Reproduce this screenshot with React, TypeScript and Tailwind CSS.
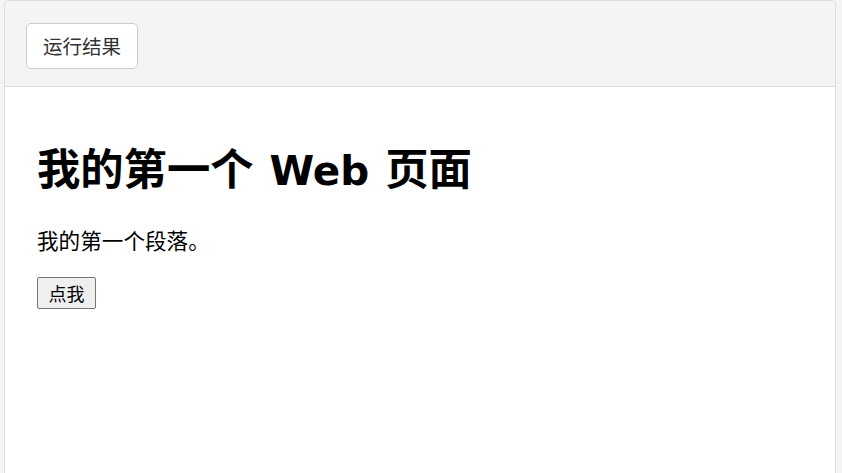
import React from "react";

export default function App() {
  return (
    <div
      className="min-h-screen bg-[#f4f4f4] pl-[4px] pr-[6px] overflow-hidden"
      style={{ fontFamily: '"Noto Sans CJK SC", "Noto Sans", sans-serif' }}
    >
      <div className="h-[480px] border border-b-0 border-[#dddddd] rounded-t-[5px] bg-white overflow-hidden">
        <div className="bg-[#f4f4f4] border-b border-[#dddddd] pt-[22px] pb-[17px] pl-[21px]">
          <button className="w-[112px] h-[46px] bg-white border border-[#cccccc] rounded-[5px] text-[19.5px] text-[#333333] flex items-center justify-center">
            运行结果
          </button>
        </div>
        <div className="pl-[32px] pt-[53px]">
          <h1 className="text-[43.3px] leading-[52px] h-[52px] font-bold text-black m-0 whitespace-nowrap">
            我的第一个
            <span className="ml-[16px] mr-[16px] text-[40.5px] font-['DejaVu_Sans',sans-serif]">Web</span>
            页面
          </h1>
          <p className="mt-[33px] text-[21.6px] leading-[30px] h-[30px] text-black">
            我的第一个段落。
          </p>
          <button className="mt-[22px] w-[59px] h-[32px] bg-[#efefef] border border-[#767676] rounded-[2px] text-[18px] text-black flex items-center justify-center">
            点我
          </button>
        </div>
      </div>
    </div>
  );
}
